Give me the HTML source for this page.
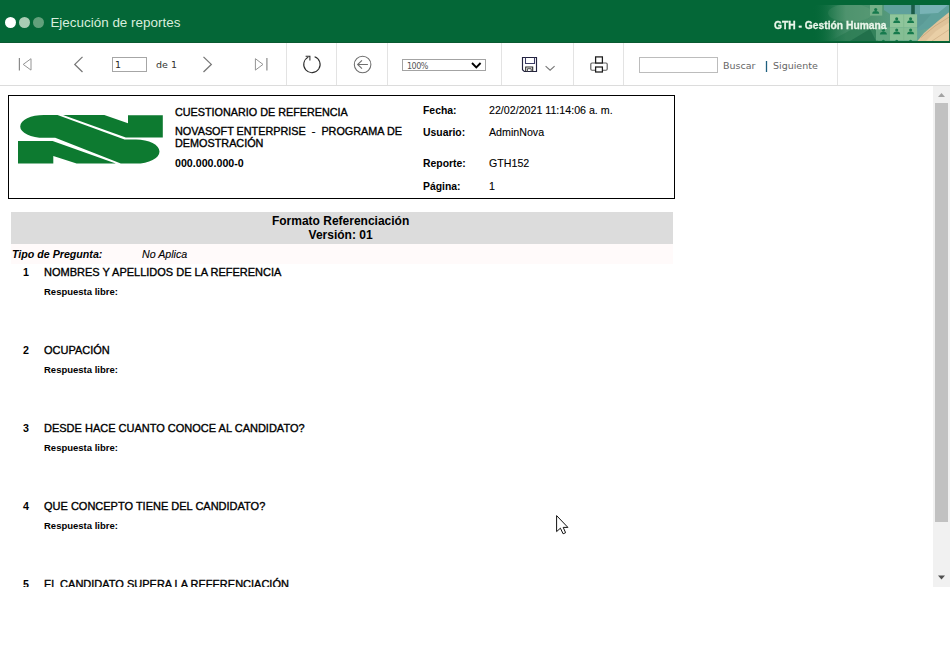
<!DOCTYPE html>
<html lang="es">
<head>
<meta charset="utf-8">
<title>Ejecución de reportes</title>
<style>
*{box-sizing:border-box;margin:0;padding:0}
html,body{width:950px;height:649px;overflow:hidden;background:#fff}
body{position:relative;font-family:"Liberation Sans",Arial,sans-serif;color:#000}
.abs{position:absolute}
#hdr{left:0;top:0;width:950px;height:43px;background:#046737;overflow:hidden;border-bottom:1px solid #0a5a31}
#hdr .dot{position:absolute;top:17px;width:11px;height:11px;border-radius:50%}
#hdr .ttl{position:absolute;left:50.4px;top:14px;font-size:13.45px;line-height:18px;color:#d9eedd;white-space:nowrap}
#hdr .mod{position:absolute;left:774px;top:18px;font-size:11.5px;line-height:14px;font-weight:bold;color:#eaf6ea;white-space:nowrap;transform-origin:0 50%;transform:scaleX(.894);-webkit-text-stroke:0.3px #eaf6ea}
#tb{left:0;top:43px;width:950px;height:43px;background:#fff;border-bottom:1px solid #dcdcdc}
.sep{position:absolute;top:43px;width:1px;height:42px;background:#e3e3e3}
.vd{font-family:"DejaVu Sans",Verdana,sans-serif}
.t{position:absolute;white-space:nowrap;line-height:14px;font-size:10.67px}
.b{font-weight:bold}
.i{font-style:italic}
#view{left:0;top:86px;width:933px;height:501px;overflow:hidden}
#view .t{-webkit-text-stroke:0.35px #000}
#view .t.b{-webkit-text-stroke:0}
#view .t.v{-webkit-text-stroke:0.1px #000}
</style>
</head>
<body>
<div id="hdr" class="abs">
  <div class="dot" style="left:4.5px;background:#fff"></div>
  <div class="dot" style="left:19px;background:#a9cdb4"></div>
  <div class="dot" style="left:33px;background:#62a07b"></div>
  <div class="ttl">Ejecución de reportes</div>
  <svg class="abs" style="left:800px;top:0" width="150" height="43" viewBox="800 0 150 43">
    <defs>
      <linearGradient id="bg1" x1="0" x2="1" y1="0" y2="0">
        <stop offset="0" stop-color="#046737"/>
        <stop offset="0.18" stop-color="#3a8660"/>
        <stop offset="0.45" stop-color="#4f9470"/>
        <stop offset="0.75" stop-color="#5fa394"/>
        <stop offset="1" stop-color="#7fae97"/>
      </linearGradient>
      <linearGradient id="fade" x1="0" x2="1" y1="0" y2="0">
        <stop offset="0" stop-color="#046737" stop-opacity="1"/>
        <stop offset="1" stop-color="#046737" stop-opacity="0"/>
      </linearGradient>
      <filter id="soft" x="-5%" y="-5%" width="110%" height="110%"><feGaussianBlur stdDeviation="0.45"/></filter>
      <clipPath id="bclip"><rect x="812" y="5" width="138" height="36"/></clipPath>
      <g id="pers"><circle cx="0" cy="-1.3" r="1.55"/><path d="M-3.5 2.9C-3.5 0.9 -2 0.2 0 0.2C2 0.2 3.5 0.9 3.5 2.9z"/></g>
    </defs>
    <rect x="812" y="5" width="138" height="36" fill="url(#bg1)"/>
    <g clip-path="url(#bclip)"><g filter="url(#soft)">
      <ellipse cx="850" cy="13" rx="22" ry="9" fill="#5d9d78" opacity=".5"/>
      <path d="M830 41l30-16l18 2v14z" fill="#2a7a52" opacity=".7"/>
      <path d="M850 41l20-12l6 12z" fill="#1a6a44" opacity=".7"/>
      <path d="M884 5h66v10l-16 12l-17 4v-17h-27l-6 -4z" fill="#5fa19c"/>
      <path d="M917 14.5h14l-8 9l-6 5z" fill="#5a9a96"/>
      <path d="M920 5h28l-10 8l-18 1z" fill="#7fb8bd" opacity=".8"/>
      <path d="M911.2 5h3.6v9.5h-3.6z" fill="#1a5c47"/>
      <path d="M917.4 41L924 33L938 21L950 11.5V41z" fill="#dfc39a"/>
      <path d="M926 41L936 31L950 22V41z" fill="#e9cfa6"/>
      <path d="M921 37.5L935 26L950 16.5" stroke="#c9a67c" stroke-width="1" fill="none" opacity=".8"/>
      <path d="M932 41L950 29" stroke="#cfae85" stroke-width="1" fill="none" opacity=".7"/>
      <rect x="870" y="5" width="12.2" height="10.6" fill="#74b088"/>
      <rect x="876" y="27.3" width="14" height="13.2" fill="#62a680"/>
      <rect x="890" y="14.3" width="27.1" height="13" fill="#8fc59b"/>
      <rect x="890" y="27.3" width="27.1" height="13.2" fill="#85be94"/>
      <path d="M903.7 14.3v26.2" stroke="#7ab68b" stroke-width="0.7"/>
      <g fill="#187a4e">
        <use href="#pers" x="875.7" y="10.9"/>
        <use href="#pers" x="896.7" y="20.1"/>
        <use href="#pers" x="910.6" y="20.1"/>
        <use href="#pers" x="896.7" y="31.3"/>
        <use href="#pers" x="910.6" y="31.3"/>
        <use href="#pers" x="883.4" y="31.6"/>
        <use href="#pers" x="883.4" y="42.6"/>
        <use href="#pers" x="896.7" y="42.6"/>
        <use href="#pers" x="910.6" y="42.6"/>
      </g>
      </g><rect x="949" y="5" width="1" height="36" fill="#2d6f50"/>
    </g>
    <rect x="812" y="5" width="34" height="36" fill="url(#fade)"/>
  </svg>
  <div class="mod">GTH - Gestión Humana</div>
</div>
<div id="tb" class="abs"></div>
<div class="sep" style="left:286px"></div>
<div class="sep" style="left:336px"></div>
<div class="sep" style="left:387px"></div>
<div class="sep" style="left:501px"></div>
<div class="sep" style="left:573px"></div>
<div class="sep" style="left:623px"></div>
<div class="sep" style="left:837px"></div>

<svg class="abs" style="left:0;top:43px" width="950" height="43" viewBox="0 43 950 43" fill="none">
  <!-- first -->
  <path d="M19.4 58v12.6" stroke="#8a8a8a" stroke-width="1.2"/>
  <path d="M31 58.7L23.2 64.4L31 70.1z" stroke="#949494" stroke-width="1"/>
  <!-- prev -->
  <path d="M82.5 56.9L74.8 64.4L82.5 72" stroke="#777" stroke-width="1.3"/>
  <!-- next -->
  <path d="M203.5 56.9L211.3 64.4L203.5 72" stroke="#777" stroke-width="1.3"/>
  <!-- last -->
  <path d="M255.4 58.7L263 64.4L255.4 70.1z" stroke="#949494" stroke-width="1"/>
  <path d="M266.9 58v12.6" stroke="#8a8a8a" stroke-width="1.2"/>
  <!-- refresh -->
  <path d="M314.6 56.7A8.2 8.2 0 1 1 308.3 57.1" stroke="#2a2a2a" stroke-width="1.05"/>
  <path d="M305.6 56.3h4.3v4.2" stroke="#2a2a2a" stroke-width="1.05"/>
  <!-- back -->
  <circle cx="362.6" cy="64.5" r="8.3" stroke="#6e6e6e" stroke-width="1.05"/>
  <path d="M367.9 64.5h-10.3M362 60.3l-4.4 4.2l4.4 4.2" stroke="#6e6e6e" stroke-width="1.05"/>
  <!-- select -->
  <rect x="402.5" y="59.5" width="83" height="11" fill="#fff" stroke="#a3a3a3"/>
  <path d="M472 63l4.3 4.3l4.3-4.3" stroke="#000" stroke-width="1.9"/>
  <!-- save -->
  <path d="M522.5 57.5h14v14h-12.2l-1.8-1.8z" stroke="#23233f" stroke-width="1.15"/>
  <path d="M525.5 57.5v6h9v-6" stroke="#3c3c66" stroke-width="1.05"/>
  <path d="M525.7 71.5v-4.5h7v4.5" stroke="#2a2a2a" stroke-width="1.1"/>
  <path d="M527.4 71.5v-2.8h3.8v2.8" stroke="#4a4a4a" stroke-width="1"/>
  <path d="M545.6 66.1l4.5 4.1l4.5-4.1" stroke="#777" stroke-width="1.1"/>
  <!-- print -->
  <rect x="590.8" y="63" width="16.4" height="7.2" rx="1.2" stroke="#5c5c5c" stroke-width="1.15"/>
  <rect x="595.6" y="56.9" width="6.8" height="6.1" fill="#fff" stroke="#1c1c1c" stroke-width="1.25"/>
  <rect x="595.6" y="67" width="6.8" height="5" fill="#fff" stroke="#1c1c1c" stroke-width="1.25"/>
  <!-- inputs -->
  <rect x="112.5" y="57.5" width="34" height="14" fill="#fff" stroke="#a6a6a6"/>
  <rect x="639.5" y="57.5" width="78" height="15" fill="#fff" stroke="#bcbcbc"/>
  <path d="M766.5 61v11" stroke="#1d5f7f" stroke-width="1.3"/>
</svg>
<div class="t vd" style="left:115px;top:58px;font-size:9.5px;color:#2a2a2a">1</div>
<div class="t vd" style="left:156px;top:58px;font-size:9.5px;color:#333">de 1</div>
<div class="t vd" style="left:407px;top:60px;font-size:8px;letter-spacing:-0.5px;color:#555">100%</div>
<div class="t vd" style="left:723px;top:59px;font-size:9.5px;color:#666">Buscar</div>
<div class="t vd" style="left:773px;top:59px;font-size:9.5px;color:#666">Siguiente</div>

<div id="view" class="abs">
 <div class="abs" style="left:8px;top:9px;width:667px;height:104px;border:1px solid #000"></div>
 <svg class="abs" style="left:0;top:0" width="180" height="120" viewBox="0 86 180 120">
  <g fill="#0d7a30">
   <path d="M63 115H104.3L128 123.2V115.2H162.8V137.6H125.8z"/>
   <path d="M44 115H57.5L124.5 139.5H136A23.5 12.05 0 0 1 136 163.6H120.8L55.2 137.8H44A23.8 11.4 0 0 1 44 115z"/>
   <path d="M18 141H52.6L115.8 163.6H76.6L53.3 155.9V163.6H18z"/>
  </g>
 </svg>

 <div class="t" style="left:175px;top:19px;font-size:10.8px">CUESTIONARIO DE REFERENCIA</div>
 <div class="t" style="left:175px;top:39px;line-height:12px;font-size:10.83px">NOVASOFT ENTERPRISE&nbsp; -&nbsp; PROGRAMA DE<br>DEMOSTRACIÓN</div>
 <div class="t b" style="left:175px;top:70px;font-size:10.67px">000.000.000-0</div>

 <div class="t b" style="left:423px;top:18px;font-size:10.4px">Fecha:</div>
 <div class="t b" style="left:423px;top:40px;font-size:10.4px">Usuario:</div>
 <div class="t b" style="left:423px;top:71px;font-size:10.4px">Reporte:</div>
 <div class="t b" style="left:423px;top:94px;font-size:10.4px">Página:</div>
 <div class="t v" style="left:489px;top:17px;font-size:10.67px">22/02/2021 11:14:06 a. m.</div>
 <div class="t v" style="left:489px;top:39px;font-size:10.67px">AdminNova</div>
 <div class="t v" style="left:489px;top:70px;font-size:10.67px">GTH152</div>
 <div class="t v" style="left:489px;top:93px;font-size:10.67px">1</div>

 <div class="abs" style="left:11px;top:126px;width:662px;height:32px;background:#dcdcdc"></div>
 <div class="t b" style="left:9.6px;width:662px;top:128px;font-size:12px;text-align:center">Formato Referenciación</div>
 <div class="t b" style="left:9.6px;width:662px;top:142px;font-size:12px;text-align:center">Versión: 01</div>
 <div class="abs" style="left:11px;top:158px;width:662px;height:20px;background:#fffafa"></div>
 <div class="t b i" style="left:12px;top:161px">Tipo de Pregunta:</div>
 <div class="t i v" style="left:142px;top:161px">No Aplica</div>

 <div class="t b" style="left:23px;top:179px">1</div>
 <div class="t" style="left:44px;top:179px;font-size:11px">NOMBRES Y APELLIDOS DE LA REFERENCIA</div>
 <div class="t b" style="left:44px;top:199px;font-size:9.5px">Respuesta libre:</div>

 <div class="t b" style="left:23px;top:257px">2</div>
 <div class="t" style="left:44px;top:257px;font-size:11px">OCUPACIÓN</div>
 <div class="t b" style="left:44px;top:277px;font-size:9.5px">Respuesta libre:</div>

 <div class="t b" style="left:23px;top:335px">3</div>
 <div class="t" style="left:44px;top:335px;font-size:11px">DESDE HACE CUANTO CONOCE AL CANDIDATO?</div>
 <div class="t b" style="left:44px;top:355px;font-size:9.5px">Respuesta libre:</div>

 <div class="t b" style="left:23px;top:413px">4</div>
 <div class="t" style="left:44px;top:413px;font-size:11px">QUE CONCEPTO TIENE DEL CANDIDATO?</div>
 <div class="t b" style="left:44px;top:433px;font-size:9.5px">Respuesta libre:</div>

 <div class="t b" style="left:23px;top:491px">5</div>
 <div class="t" style="left:44px;top:491px;font-size:11px">EL CANDIDATO SUPERA LA REFERENCIACIÓN</div>
</div>

<!-- scrollbar -->
<div class="abs" style="left:933px;top:86px;width:17px;height:501px;background:#f1f1f1"></div>
<div class="abs" style="left:935px;top:103px;width:13px;height:419px;background:#c1c1c1"></div>
<svg class="abs" style="left:933px;top:86px" width="17" height="501" viewBox="0 0 17 501">
  <path d="M5 11L8.5 7L12 11z" fill="#a3a3a3"/>
  <path d="M5 489.5L8.5 493.5L12 489.5z" fill="#505050"/>
</svg>

<!-- cursor -->
<svg class="abs" style="left:550px;top:510px" width="24" height="30" viewBox="550 510 24 30">
  <path d="M556.6 515.6V531.6L560.4 528.2L563.1 533.8L565.6 532.7L563.2 527.4H567.9z" fill="#fff" stroke="#111" stroke-width="1" stroke-linejoin="round"/>
</svg>
</body>
</html>
